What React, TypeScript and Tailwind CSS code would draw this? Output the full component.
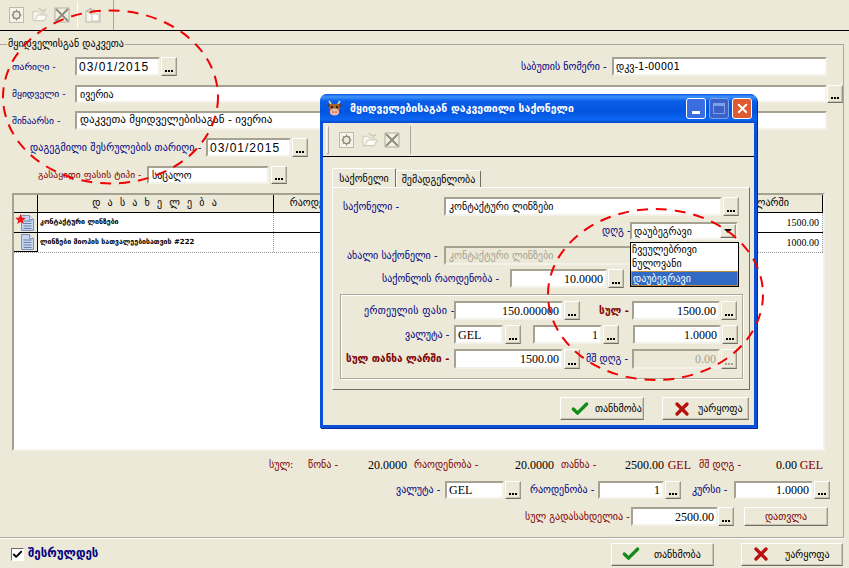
import React from 'react';
import clsx from 'clsx';
import { Check, X } from 'lucide-react';

const sunken = 'border-2 border-t-[#a5a291] border-l-[#a5a291] border-r-[#f4f2e8] border-b-[#f4f2e8]';
const raised = 'border border-t-white border-l-white border-r-[#9b988a] border-b-[#716f64] shadow-[inset_-1px_-1px_0_#c9c6b6]';
const georgian = "font-['DejaVu_Sans',sans-serif]";
const serif = "font-['Liberation_Serif',serif]";

const Label: React.FC<{ className?: string; color?: 'navy' | 'maroon'; bold?: boolean; small?: boolean; children: React.ReactNode }> = ({ className, color = 'navy', bold, small, children }) => (
    <span className={clsx(georgian, small ? 'text-[9.5px]' : 'text-[10px]', 'leading-none whitespace-nowrap shrink-0', color === 'navy' ? 'text-[#000080]' : 'text-[#800000]', bold && 'font-bold', className)}>{children}</span>
);

const Input: React.FC<{ className?: string; value?: string; num?: boolean; date?: boolean; geo?: boolean; big?: boolean; disabled?: boolean }> = ({ className, value, num, date, geo, big, disabled }) => (
    <div className={clsx(sunken, 'h-full flex items-center shrink-0 overflow-hidden whitespace-nowrap px-[2px]', disabled ? 'bg-[#ece9d8] text-[#a5a291]' : 'bg-white text-black', num && 'justify-end', className,
        geo ? `${georgian} ${big ? 'text-[11px]' : 'text-[10px]'}` : date ? "font-['Liberation_Sans',sans-serif] text-[12px] tracking-[1px]" : `${serif} text-[12px]`)}>
        {value}
    </div>
);

const Dots: React.FC<{ className?: string; disabled?: boolean }> = ({ className, disabled }) => (
    <div className={clsx(raised, 'h-full w-[16px] shrink-0 bg-[#ece9d8] flex items-end justify-center pb-[3px] gap-[1px]', className)}>
        <i className={clsx('w-[2px] h-[2px]', disabled ? 'bg-[#a5a291]' : 'bg-black')} />
        <i className={clsx('w-[2px] h-[2px]', disabled ? 'bg-[#a5a291]' : 'bg-black')} />
        <i className={clsx('w-[2px] h-[2px]', disabled ? 'bg-[#a5a291]' : 'bg-black')} />
    </div>
);

const ActionButton: React.FC<{ className?: string; kind: 'ok' | 'no'; gap: string; iconMl: string; children: React.ReactNode }> = ({ className, kind, gap, iconMl, children }) => (
    <div className={clsx(raised, 'h-[23px] bg-[#ece9d8] flex items-center shrink-0', className)}>
        {kind === 'ok'
            ? <Check size={20} strokeWidth={4} className={clsx('text-[#128a1c] shrink-0', iconMl)} />
            : <X size={20} strokeWidth={4} className={clsx('text-[#b80f0f] shrink-0', iconMl)} />}
        <span className={clsx(georgian, 'text-[10px] text-black whitespace-nowrap', gap)}>{children}</span>
    </div>
);

const ToolIcons: React.FC<{ paste?: boolean }> = ({ paste }) => (
    <>
        <svg width="16" height="18" viewBox="0 0 16 18" className="shrink-0">
            <rect x="0.5" y="1.5" width="14" height="15" fill="#f6f4ea" stroke="#bdbaaa" />
            <circle cx="7.5" cy="9" r="3.6" fill="#ece9d8" stroke="#8b897c" strokeWidth="1.4" />
            <path d="M7.5 3.5v2M7.5 12.5v2M2.5 9h2M10.5 9h2M4 5.5l1.4 1.4M11 5.5l-1.4 1.4M4 12.5l1.4-1.4M11 12.5l-1.4-1.4" stroke="#8b897c" strokeWidth="1.2" />
        </svg>
        <svg width="16" height="16" viewBox="0 0 17 16" className="shrink-0 ml-[7px]">
            <path d="M1 4h5l2 2h5v8H1z" fill="#f8f6ec" stroke="#c9c6b6" />
            <path d="M3 14l3-6h10l-3 6z" fill="#fbfaf3" stroke="#c9c6b6" />
            <path d="M7 1l5 3 3-2" fill="none" stroke="#c9c6b6" strokeWidth="1.4" />
        </svg>
        <svg width="16" height="16" viewBox="0 0 16 16" className="shrink-0 ml-[6px]">
            <rect x="1" y="1" width="14" height="14" fill="#f1efe2" stroke="#b3b0a0" />
            <path d="M2 2l12 12M14 2L2 14" stroke="#8f8d80" strokeWidth="2" />
        </svg>
        {paste && (
            <>
                <i className="w-px h-[26px] bg-[#aca899] border-r border-white ml-[7px] shrink-0" />
                <svg width="16" height="16" viewBox="0 0 16 16" className="shrink-0 ml-[7px]">
                    <rect x="1" y="4" width="14" height="11" fill="#f7f5ec" stroke="#bdbaaa" />
                    <rect x="7" y="7" width="7" height="7" fill="#fff" stroke="#c9c6b6" />
                    <path d="M2 4l4-3v2h4v2H6v2z" fill="#e2dfd0" stroke="#9b988a" strokeWidth="0.8" />
                </svg>
            </>
        )}
    </>
);

const DocIcon: React.FC<{ star?: boolean }> = ({ star }) => (
    <svg width="22" height="18" viewBox="0 0 22 18">
        <path d="M6.5 1.5h8l4 4v11h-12z" fill="#c5d6f0" stroke="#7f8fb5" />
        <path d="M14.5 1.5v4h4" fill="#eef3fb" stroke="#7f8fb5" />
        <path d="M8.5 7h8M8.5 9.5h8M8.5 12h8M8.5 14.5h8" stroke="#6c7ea8" />
        {star && <path d="M5.5 0l1.5 3.6 3.8.3-2.9 2.5.9 3.7-3.3-2-3.3 2 .9-3.7L.2 3.9 4 3.6z" fill="#f01c1c" />}
    </svg>
);

const CowIcon = () => (
    <svg width="15" height="17" viewBox="0 0 15 17">
        <path d="M2 1l2 3M13 1l-2 3" stroke="#e8d9b0" strokeWidth="1.6" />
        <path d="M0 5l3 1M15 5l-3 1" stroke="#6b3a1e" strokeWidth="2" />
        <path d="M3 4h9l1 5-2 6H4L2 9z" fill="#a8622c" />
        <ellipse cx="7.5" cy="12" rx="4.6" ry="3.6" fill="#f3b7a8" />
        <circle cx="5" cy="7" r="1.1" fill="#111" />
        <circle cx="10" cy="7" r="1.1" fill="#111" />
        <circle cx="6" cy="12" r="0.7" fill="#6b3a1e" />
        <circle cx="9" cy="12" r="0.7" fill="#6b3a1e" />
    </svg>
);

const totals = [
    { t: 'სულ:', c: 'ml-[269px] w-[39px]' },
    { t: 'წონა -', c: 'w-[60px]' },
    { t: '20.0000', c: 'w-[38px]', n: true },
    { t: 'რაოდენობა -', c: 'ml-[8px] w-[101px]' },
    { t: '20.0000', c: 'w-[38px]', n: true },
    { t: 'თანხა -', c: 'ml-[8px] w-[64px]' },
    { t: '2500.00', c: 'w-[39px]', n: true },
    { t: 'GEL', c: 'w-[27px]', n: true, red: true },
    { t: 'მშ დღგ -', c: 'ml-[8px] w-[77px]' },
    { t: '0.00', c: 'w-[20px]', n: true },
    { t: 'GEL', c: 'w-[27px]', n: true, red: true },
];

const Dialog = () => (
    <div className="absolute left-[320px] top-[94px] w-[437px] h-[334px] rounded-t-[7px] bg-[#0a50d8] p-[3px] pt-0 flex flex-col shadow-[1px_1px_0_#0a2a9a]">
        <div className="h-[29px] -mx-[3px] rounded-t-[7px] flex items-center pl-[7px] pr-[5px] shrink-0 bg-[linear-gradient(180deg,#0a5ae8_0%,#3f93fb_10%,#0a5fea_24%,#0453de_60%,#0a66f2_88%,#0348c8_100%)]">
            <CowIcon />
            <span className={clsx(georgian, 'ml-[8px] text-[10.5px] font-bold text-white whitespace-nowrap')}>მყიდველებისაგან დაკვეთილი საქონელი</span>
            <div className="ml-auto w-[20px] h-[21px] rounded-[3px] border border-white bg-[#3a6ee0] flex items-end pl-[5px] pb-[4px]">
                <i className="w-[8px] h-[3px] bg-white" />
            </div>
            <div className="ml-[3px] w-[20px] h-[21px] rounded-[3px] border border-[#7fa0e8] bg-[#3a62c8] flex items-center justify-center">
                <i className="w-[12px] h-[11px] border border-[#7fa0e8] border-t-[3px]" />
            </div>
            <div className="ml-[3px] w-[20px] h-[21px] rounded-[3px] border border-white bg-[#df5a30] flex items-center justify-center">
                <X size={15} strokeWidth={3} className="text-white" />
            </div>
        </div>
        <div className="flex-1 bg-[#ece9d8] flex flex-col">
            <div className="h-[33px] shrink-0 border-b border-black flex items-center pl-[3px] box-content">
                <i className="w-[3px] h-[28px] border border-[#aca899] border-t-white border-l-white" />
                <div className="ml-[10px] flex items-center"><ToolIcons /></div>
                <i className="w-px h-[28px] bg-[#aca899] ml-[10px]" />
            </div>
            <div className="flex items-end ml-[9px] mt-[10px] h-[20px] shrink-0">
                <div className={clsx(georgian, 'w-[64px] h-[20px] text-[10px] text-black flex items-center justify-center border border-white border-b-0 border-r-[#716f64] rounded-t-[2px] whitespace-nowrap -mb-px relative bg-[#ece9d8]')}>საქონელი</div>
                <div className={clsx(georgian, 'w-[85px] h-[17px] text-[10px] text-black flex items-center justify-center border border-white border-b-0 border-r-[#716f64] rounded-t-[2px] whitespace-nowrap')}>შემადგენლობა</div>
            </div>
            <div className="relative ml-[9px] w-[418px] h-[203px] shrink-0 border border-t-white border-l-white border-r-[#716f64] border-b-[#716f64]">
                <div className="flex items-center h-[19px] mt-[9px]">
                    <Label className="ml-[10px] w-[101px]">საქონელი -</Label>
                    <Input className="w-[278px] pl-[3px]" geo value="კონტაქტური ლინზები" />
                    <Dots className="ml-px" />
                </div>
                <div className="flex items-center h-[18px] mt-[6px]">
                    <Label className="ml-[269px] w-[28px]">დღგ -</Label>
                    <div className={clsx(sunken, 'w-[108px] h-full bg-white flex items-center justify-between')}>
                        <span className={clsx(georgian, 'text-[10px] pl-[2px] whitespace-nowrap')}>დაუბეგრავი</span>
                        <div className={clsx(raised, 'w-[16px] h-full bg-[#ece9d8] flex items-center justify-center')}>
                            <i className="w-0 h-0 border-x-[4px] border-x-transparent border-t-[4px] border-t-black" />
                        </div>
                    </div>
                </div>
                <div className="flex items-center h-[19px] mt-[6px]">
                    <Label className="ml-[14px] w-[97px]">ახალი საქონელი -</Label>
                    <Input className="w-[294px] pl-[3px]" geo disabled value="კონტაქტური ლინზები" />
                </div>
                <div className="flex items-center h-[19px] mt-[4px]">
                    <Label className="ml-[49px] w-[128px]">საქონლის რაოდენობა -</Label>
                    <Input className="w-[97px]" num value="10.0000" />
                    <Dots className="ml-px" />
                </div>
                <div className="ml-[7px] mt-[6px] w-[403px] h-[85px] border border-[#aca899] shadow-[inset_1px_1px_0_#fff,1px_1px_0_#fff] pt-[6px]">
                    <div className="flex items-center h-[19px]">
                        <Label className="ml-[23px] w-[90px] tracking-[0.3px]">ერთეულის ფასი -</Label>
                        <Input className="w-[109px]" num value="150.000000" />
                        <Dots className="ml-px" />
                        <Label className="ml-[19px] w-[33px]" color="maroon" bold>სულ -</Label>
                        <Input className="w-[88px]" num value="1500.00" />
                        <Dots className="ml-px" />
                    </div>
                    <div className="flex items-center h-[19px] mt-[5px]">
                        <Label className="ml-[64px] w-[49px]">ვალუტა -</Label>
                        <Input className="w-[49px]" value="GEL" />
                        <Dots className="ml-[2px]" />
                        <Input className="w-[69px] ml-[12px]" num value="1" />
                        <Dots className="ml-px" />
                        <Input className="w-[88px] ml-[14px]" num value="1.0000" />
                        <Dots className="ml-px" />
                    </div>
                    <div className="flex items-center h-[20px] mt-[5px]">
                        <Label className="ml-[5px] w-[108px]" color="maroon" bold>სულ თანხა ლარში -</Label>
                        <Input className="w-[109px]" num value="1500.00" />
                        <Dots className="ml-px" />
                        <Label className="ml-[6px] w-[46px]">მშ დღგ -</Label>
                        <Input className="w-[88px]" num disabled value="0.00" />
                        <Dots className="ml-px" disabled />
                    </div>
                </div>
                {/* open combo list */}
                <div className={clsx(georgian, 'absolute left-[297px] top-[54px] w-[109px] h-[45px] border border-black bg-white text-[10px] text-black flex flex-col')}>
                    <span className="h-[14px] leading-[14px] pl-px">ჩვეულებრივი</span>
                    <span className="h-[14px] leading-[14px] pl-px">ნულოვანი</span>
                    <span className="h-[15px] leading-[13px] pl-px bg-[#316ac5] text-white border border-[#c08a3a]">დაუბეგრავი</span>
                </div>
            </div>
            <div className="flex mt-[7px]">
                <ActionButton className="ml-[237px] w-[84px]" kind="ok" iconMl="ml-[9px]" gap="ml-[5px]">თანხმობა</ActionButton>
                <ActionButton className="ml-[18px] w-[87px]" kind="no" iconMl="ml-[9px]" gap="ml-[6px]">უარყოფა</ActionButton>
            </div>
        </div>
    </div>
);

export default function App() {
    return (
        <div className="relative w-[849px] h-[568px] overflow-hidden bg-[#ece9d8] flex flex-col">
            <div className="h-[30px] shrink-0 flex items-center pl-[9px] box-content border-b border-black">
                <ToolIcons paste />
                <i className="w-px h-[30px] bg-[#aca899] ml-[12px]" />
            </div>
            <fieldset className="mt-[6px] w-[841px] h-[501px] shrink-0 border border-[#aca899] border-l-0 shadow-[0_1px_0_#fff]">
                <legend className={clsx(georgian, 'ml-[7px] px-px h-[14px] text-[10px] leading-[14px] text-black whitespace-nowrap')}>მყიდველისგან დაკვეთა</legend>
                <div className="flex items-center h-[19px] mt-[6px]">
                    <Label className="ml-[12px] w-[63px]" small>თარიღი -</Label>
                    <Input className="w-[85px]" date value="03/01/2015" />
                    <Dots className="ml-px" />
                    <Label className="ml-[344px] w-[91px]">საბუთის ნომერი -</Label>
                    <Input className="w-[215px]" geo value="დკვ-1-00001" />
                </div>
                <div className="flex items-center h-[18px] mt-[9px]">
                    <Label className="ml-[12px] w-[63px]" small>მყიდველი -</Label>
                    <Input className="w-[752px] pl-[3px]" geo value="ივერია" />
                    <Dots />
                </div>
                <div className="flex items-center h-[19px] mt-[8px]">
                    <Label className="ml-[12px] w-[63px]" small>შინაარსი -</Label>
                    <Input className="w-[752px] pl-[3px]" geo big value="დაკვეთა მყიდველებისაგან - ივერია" />
                </div>
                <div className="flex items-center h-[19px] mt-[8px]">
                    <Label className="ml-[30px] w-[176px] tracking-[0.1px]">დაგეგმილი შესრულების თარიღი -</Label>
                    <Input className="w-[85px]" date value="03/01/2015" />
                    <Dots className="ml-px" />
                </div>
                <div className="flex items-center h-[18px] mt-[9px]">
                    <Label className="ml-[38px] w-[109px]" color="maroon" small>გასაყიდი ფასის ტიპი -</Label>
                    <Input className="w-[122px] pl-[3px]" geo value="საცალო" />
                    <Dots className="ml-[2px]" />
                </div>
                <div className={clsx(sunken, 'ml-[12px] mt-[9px] w-[813px] h-[258px] bg-white')}>
                    <div className="flex h-[18px] bg-[#ece9d8] border-b border-black text-[10px] text-black whitespace-nowrap">
                        <div className="w-[24px] border-r border-black shrink-0" />
                        <div className={clsx(georgian, 'w-[236px] border-r border-black shrink-0 text-center tracking-[2px]')}>დ ა ს ა ხ ე ლ ე ბ ა</div>
                        <div className={clsx(georgian, 'w-[90px] border-r border-black shrink-0 text-center')}>რაოდენობა</div>
                        <div className={clsx(georgian, 'w-[150px] border-r border-black shrink-0 text-center')}>ფასი</div>
                        <div className={clsx(georgian, 'w-[176px] border-r border-black shrink-0 text-center')}>თანხა</div>
                        <div className={clsx(georgian, 'flex-1 border-r border-black text-center')}>თანხა ლარში</div>
                    </div>
                    <div className="flex h-[20px] border-b border-black">
                        <div className="w-[24px] border-r border-black bg-[#ece9d8] shrink-0 flex items-center justify-center"><DocIcon star /></div>
                        <div className={clsx(georgian, 'w-[236px] border-r border-dotted border-[#999] shrink-0 pl-[2px] flex items-center text-[7px] font-bold whitespace-nowrap')}>კონტაქტური ლინზები</div>
                        <div className={clsx(serif, 'flex-1 text-[10px] text-right pr-[3px] leading-[20px] border-r border-dotted border-[#999]')}>1500.00</div>
                    </div>
                    <div className="flex h-[20px] border-b border-dotted border-[#999]">
                        <div className="w-[24px] border-r border-b border-black bg-[#ece9d8] shrink-0 flex items-center justify-center"><DocIcon /></div>
                        <div className={clsx(georgian, 'w-[236px] border-r border-dotted border-[#999] shrink-0 pl-[2px] flex items-center text-[7px] font-bold whitespace-nowrap')}>ლინზები მიოპის სათვალეებისათვის #222</div>
                        <div className={clsx(serif, 'flex-1 text-[10px] text-right pr-[3px] leading-[20px] border-r border-dotted border-[#999]')}>1000.00</div>
                    </div>
                </div>
                <div className="flex items-center h-[14px] mt-[7px]">
                    {totals.map((x, i) => x.n
                        ? <span key={i} className={clsx(serif, 'text-[12px] shrink-0 whitespace-nowrap text-right', x.c, x.red ? 'text-[#800000]' : 'text-black')}>{x.t}</span>
                        : <Label key={i} color="maroon" className={x.c}>{x.t}</Label>)}
                </div>
                <div className="flex items-center h-[18px] mt-[9px]">
                    <Label className="ml-[396px] w-[49px]">ვალუტა -</Label>
                    <Input className="w-[59px]" value="GEL" />
                    <Dots className="ml-px" />
                    <Label className="ml-[9px] w-[68px]">რაოდენობა -</Label>
                    <Input className="w-[66px]" num value="1" />
                    <Dots className="ml-px" />
                    <Label className="ml-[11px] w-[42px]">კურსი -</Label>
                    <Input className="w-[79px]" num value="1.0000" />
                    <Dots className="ml-px" />
                </div>
                <div className="flex items-center h-[19px] mt-[8px]">
                    <Label className="ml-[525px] w-[106px]" color="maroon">სულ გადასახდელია -</Label>
                    <Input className="w-[87px]" num value="2500.00" />
                    <Dots />
                    <div className={clsx(raised, georgian, 'ml-[10px] w-[84px] h-full bg-[#ece9d8] text-[10px] text-[#800000] flex items-center justify-center')}>დათვლა</div>
                </div>
            </fieldset>
            <div className="flex-1 flex items-center pt-[2px]">
                <div className="ml-[11px] w-[13px] h-[13px] border border-t-[#716f64] border-l-[#716f64] border-r-white border-b-white bg-white flex items-center justify-center shrink-0">
                    <Check size={11} strokeWidth={4} className="text-black" />
                </div>
                <span className={clsx(georgian, 'ml-[4px] text-[11.5px] font-bold text-[#000080] whitespace-nowrap')}>შესრულდეს</span>
                <ActionButton className="ml-auto w-[103px]" kind="ok" iconMl="ml-[9px]" gap="ml-[13px]">თანხმობა</ActionButton>
                <ActionButton className="ml-[27px] mr-[6px] w-[102px]" kind="no" iconMl="ml-[9px]" gap="ml-[14px]">უარყოფა</ActionButton>
            </div>
            <Dialog />
            <svg className="absolute inset-0 pointer-events-none" width="849" height="568">
                <ellipse cx="110.5" cy="97" rx="107.5" ry="86.5" fill="none" stroke="#f00000" strokeWidth="2" strokeDasharray="11 8" />
                <ellipse cx="655.5" cy="294.5" rx="107.5" ry="85.5" fill="none" stroke="#f00000" strokeWidth="2" strokeDasharray="11 8" />
            </svg>
        </div>
    );
}
